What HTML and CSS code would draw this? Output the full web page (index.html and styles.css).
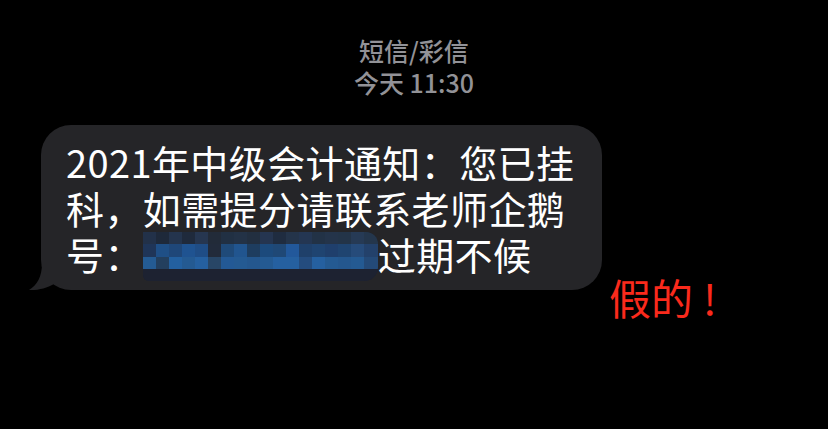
FILE: index.html
```html
<!DOCTYPE html>
<html lang="zh-CN">
<head>
<meta charset="utf-8">
<title>短信</title>
<link rel="stylesheet" href="styles.css">
</head>
<body>
<div class="screen">
  <header class="meta">
    <div class="meta-line">短信/彩信</div>
    <div class="meta-line">今天 11:30</div>
  </header>
  <div class="thread">
    <div class="bubble">
      <div class="line">2021年中级会计通知：您已挂</div>
      <div class="line">科，如需提分请联系老师企鹅</div>
      <div class="line line-mosaic"><span>号：</span><span class="mosaic"><span class="mrow r1"></span><span class="mrow r2"></span><span class="mrow r3"></span><span class="mrow r4"></span></span><span>过期不候</span></div>
      <svg class="tail" width="46" height="36" viewBox="0 0 46 36" aria-hidden="true"><path d="M14 0 L14 8 C14 22 9 30 1 35 C10 35.5 19 33 26 29 L26 0 Z" fill="#252528"/></svg>
    </div>
    <div class="note">假的<span class="bang">!</span></div>
  </div>
</div>
</body>
</html>
```
FILE: styles.css
```css
html, body {
  margin: 0;
  padding: 0;
  background: #000;
}
.screen {
  width: 828px;
  height: 429px;
  overflow: hidden;
  background: #000;
  font-family: "Noto Sans CJK SC", "Noto Sans", sans-serif;
}
.meta {
  padding-top: 34px;
  text-align: center;
  color: #929297;
  font-size: 25px;
  font-weight: 500;
  line-height: 32px;
}
.thread {
  display: flex;
  align-items: flex-start;
  padding-left: 41px;
  margin-top: 27px;
}
.bubble {
  position: relative;
  box-sizing: border-box;
  width: 561px;
  padding: 14px 25px 13px;
  background: #252528;
  border-radius: 30px;
  color: #fff;
  font-size: 38px;
  letter-spacing: 0.4px;
  line-height: 46px;
}
.line {
  white-space: nowrap;
  height: 46px;
}
.line-mosaic {
  display: flex;
  align-items: center;
}
.mosaic {
  display: flex;
  flex-direction: column;
  width: 235px;
  height: 49px;
  margin-top: 5px;
  border-radius: 0 12px 14px 6px;
  overflow: hidden;
  background: #1e2333;
}
.mrow {
  display: block;
  height: 12px;
}
.mrow.r2 { height: 13px; }
.r1 {
  background: linear-gradient(to right,
    #223149 0 13px, #1e293a 13px 26px, #24344d 26px 39px, #1f2a3c 39px 52px,
    #263650 52px 65px, #222b39 65px 78px, #213043 78px 91px, #233246 91px 104px,
    #222f40 104px 117px, #253550 117px 130px, #1f2c40 130px 143px, #24344a 143px 156px,
    #243652 156px 169px, #223246 169px 182px, #24344a 182px 195px, #233448 195px 208px,
    #263a55 208px 221px, #24364c 221px 235px);
}
.r2 {
  background: linear-gradient(to right,
    #1f3558 0 13px, #1f4f86 13px 26px, #1f4779 26px 39px, #1f5391 39px 52px,
    #1f4d86 52px 65px, #222b3b 65px 78px, #1f4a79 78px 91px, #21558f 91px 104px,
    #1e3d5f 104px 117px, #1c4a7c 117px 130px, #1f4876 130px 143px, #22589b 143px 156px,
    #1f406a 156px 169px, #1f4471 169px 182px, #1f3f6c 182px 195px, #1f4470 195px 208px,
    #264b7a 208px 221px, #23416b 221px 235px);
}
.r3 {
  background: linear-gradient(to right,
    #245b93 0 13px, #233f5e 13px 26px, #2360a0 26px 39px, #245a92 39px 52px,
    #2560a0 52px 65px, #284666 65px 78px, #235995 78px 91px, #245a92 91px 104px,
    #24578e 104px 117px, #245a92 117px 130px, #2560a0 130px 143px, #2560a0 143px 156px,
    #244c7e 156px 169px, #2560a0 169px 182px, #245a92 182px 195px, #24578e 195px 208px,
    #245a92 208px 221px, #244a78 221px 235px);
}
.r4 {
  background: #1d2231;
}
.tail {
  position: absolute;
  left: -13px;
  bottom: -1px;
}
.note {
  margin-left: 7px;
  margin-top: 151px;
  color: #fa2a1c;
  font-size: 42px;
  line-height: 42px;
  white-space: nowrap;
}
.bang {
  margin-left: 10px;
}
```
